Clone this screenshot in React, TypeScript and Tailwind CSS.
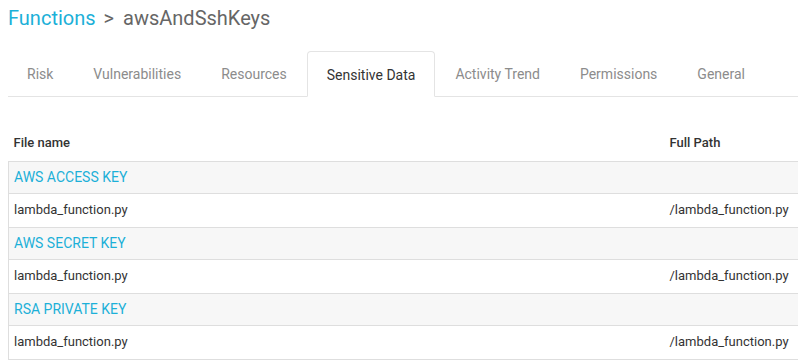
import { Fragment } from "react";

const tabs = [
  "Risk",
  "Vulnerabilities",
  "Resources",
  "Sensitive Data",
  "Activity Trend",
  "Permissions",
  "General",
];

const groups = [
  { name: "AWS ACCESS KEY", file: "lambda_function.py", path: "/lambda_function.py" },
  { name: "AWS SECRET KEY", file: "lambda_function.py", path: "/lambda_function.py" },
  { name: "RSA PRIVATE KEY", file: "lambda_function.py", path: "/lambda_function.py" },
];

export default function App() {
  return (
    <div className="w-[798px] h-[363px] overflow-hidden bg-white font-['Roboto',sans-serif]">
      {/* breadcrumb */}
      <div className="pl-2 pt-[5px] h-[51px] text-[20px] leading-[26px] flex">
        <span className="text-[#1cb0d8]">Functions</span>
        <span className="text-[#666] ml-[8px] mr-[9px]">&gt;</span>
        <span className="text-[#666]">awsAndSshKeys</span>
      </div>

      {/* tabs */}
      <div className="ml-2 flex border-b border-[#e4e4e4] h-[46px]">
        {tabs.map((t, i) => {
          const active = t === "Sensitive Data";
          return (
            <div
              key={t}
              className={
                (i === 0 ? "pl-[18px] pr-[19px] " : "px-[19px] ") +
                (active
                  ? "border border-[#e4e4e4] border-b-white -mb-px rounded-t-[4px] bg-white text-[14px] text-[#333] flex items-center pt-[2px]"
                  : "border border-transparent text-[14px] text-[#8c8c8c] flex items-center pt-[2px]")
              }
            >
              {t}
            </div>
          );
        })}
      </div>

      {/* table */}
      <table className="ml-2 mt-[30px] w-[820px] border-collapse text-[13px] text-[#333]">
        <thead>
          <tr className="h-[34px]">
            <th className="text-left font-medium pl-[5px] pb-[2px]">File name</th>
            <th className="text-left font-medium w-[158px] pb-[2px]">Full Path</th>
          </tr>
        </thead>
        <tbody>
          {groups.map((g) => (
            <Fragment key={g.name}>
              <tr className="h-[32px] bg-[#f7f7f7] border border-[#dedede]">
                <td colSpan={2} className="pl-[5px] text-[14px] text-[#1cb0d8]">
                  {g.name}
                </td>
              </tr>
              <tr className="h-[34px] border border-[#dedede]">
                <td className="pl-[5px]">{g.file}</td>
                <td>{g.path}</td>
              </tr>
            </Fragment>
          ))}
        </tbody>
      </table>
    </div>
  );
}
